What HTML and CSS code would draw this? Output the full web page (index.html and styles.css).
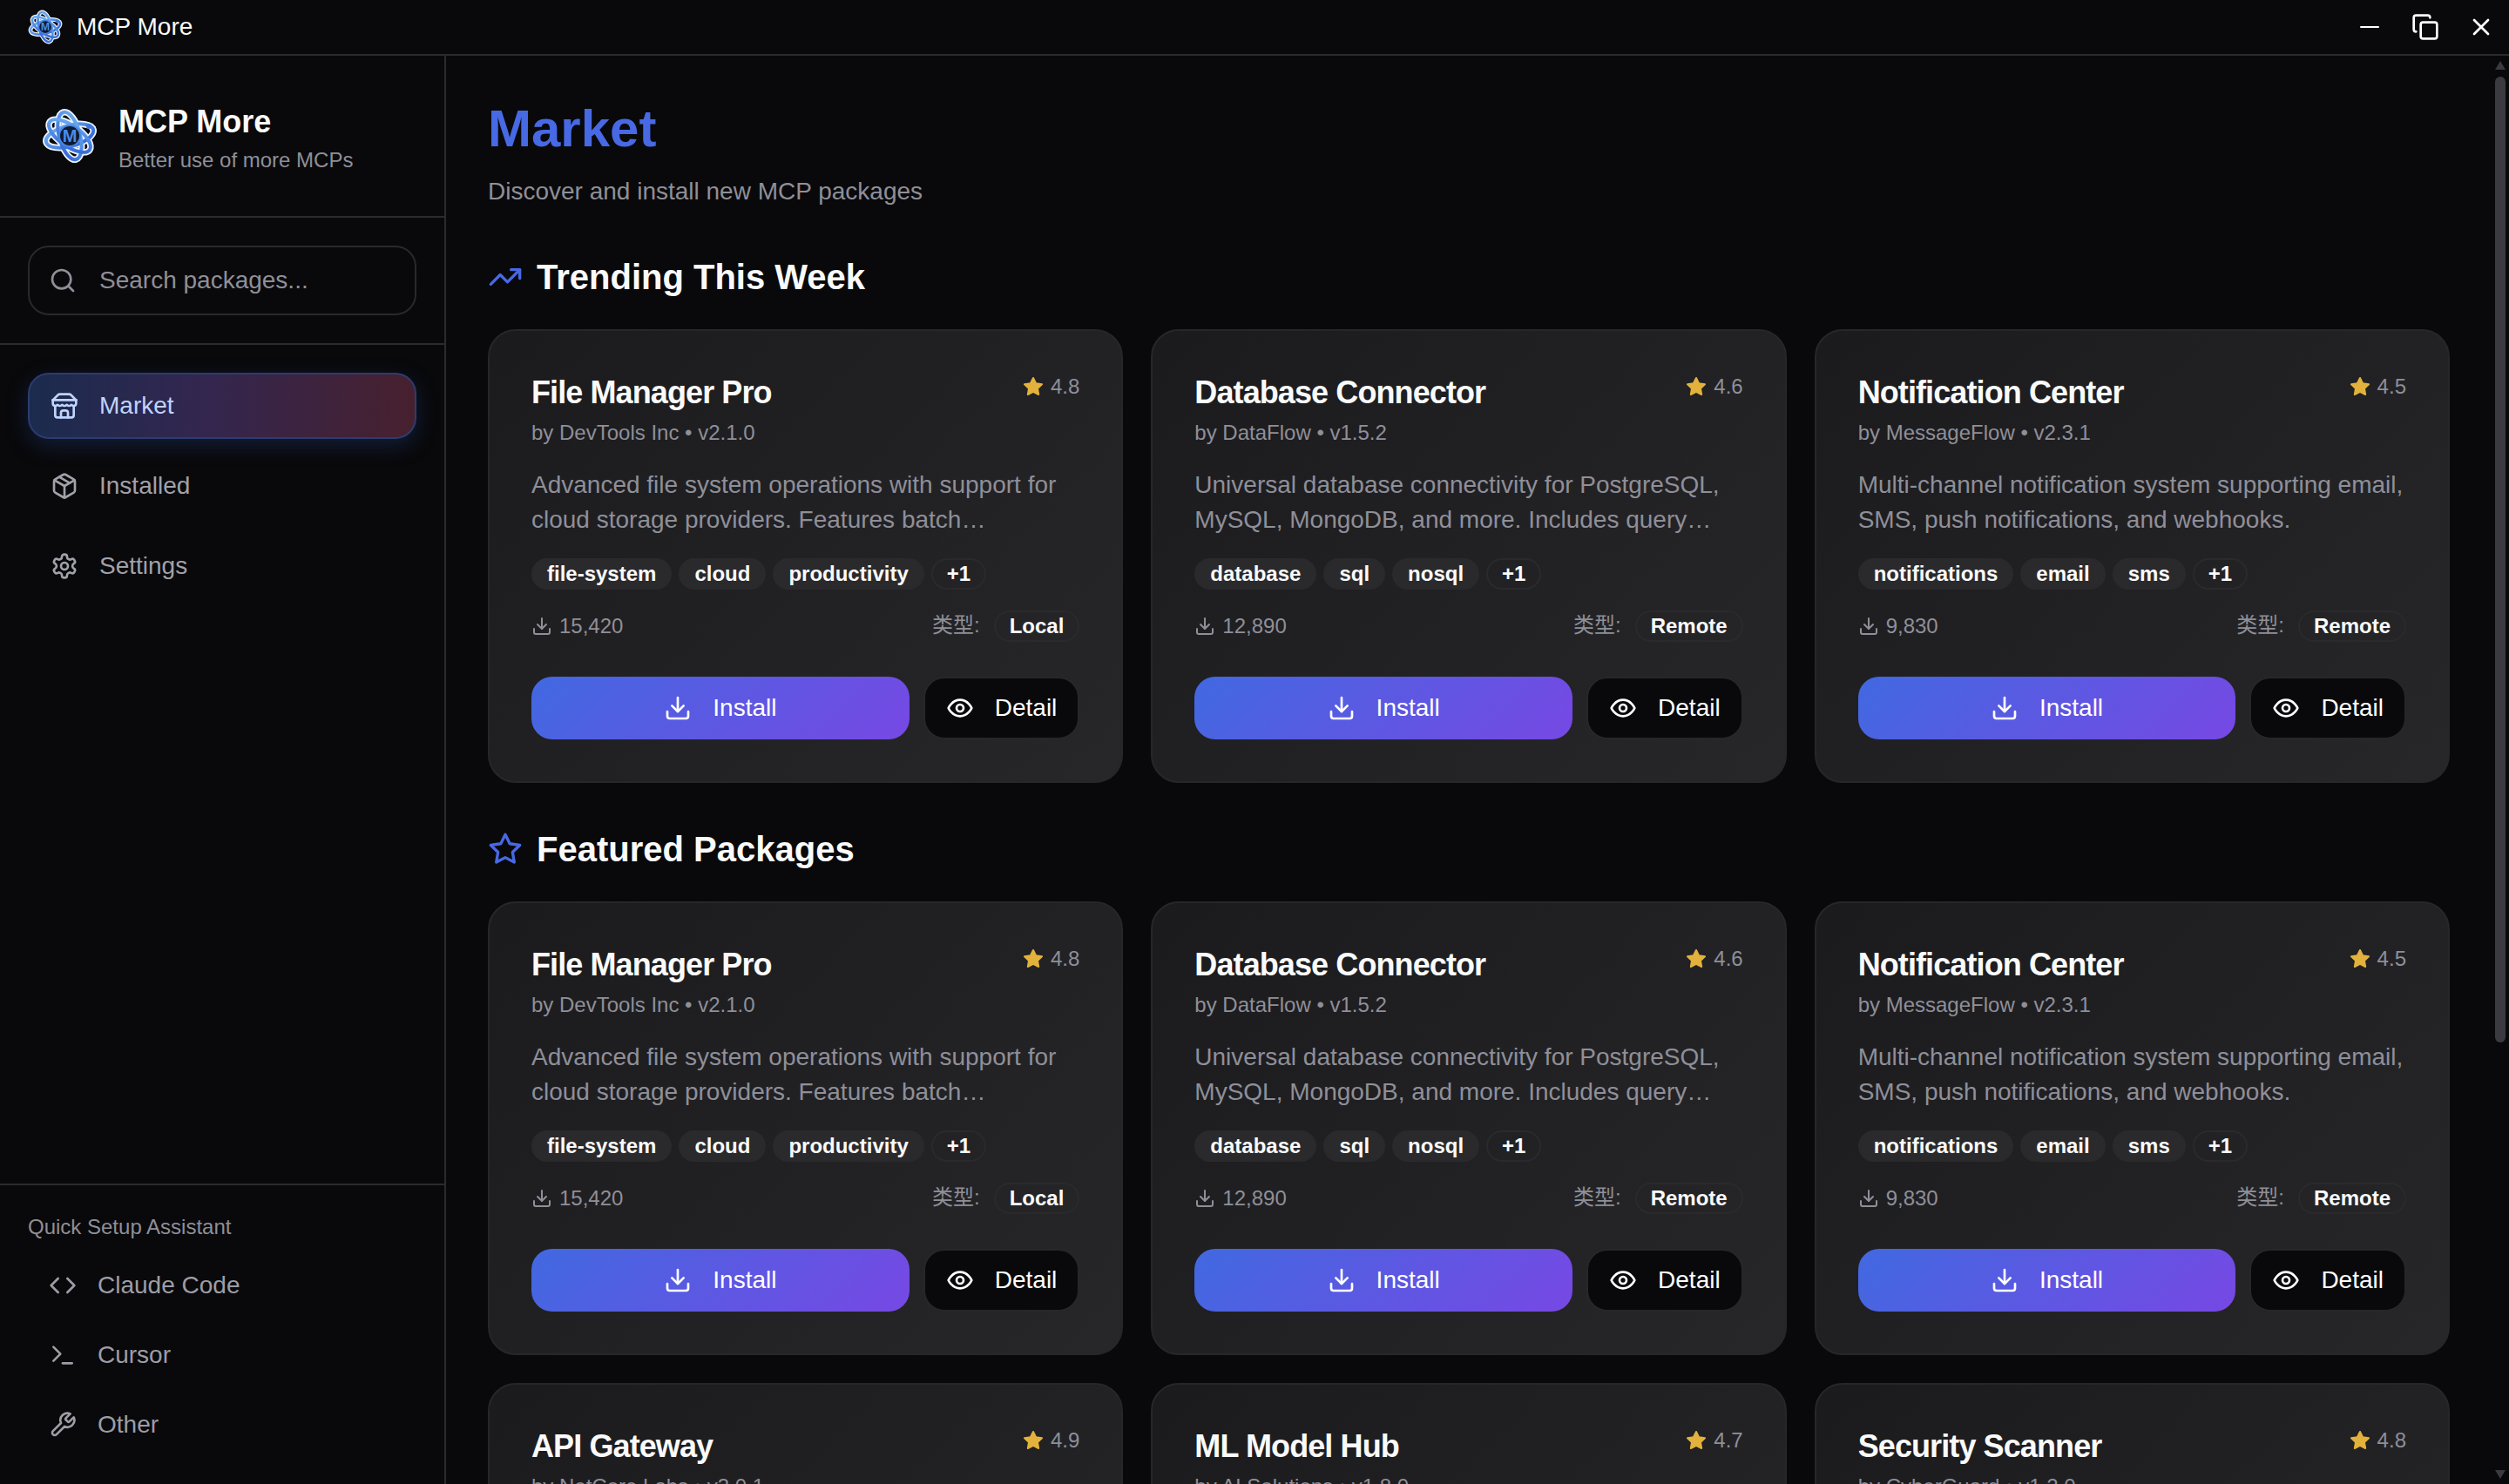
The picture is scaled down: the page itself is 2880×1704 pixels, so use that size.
FILE: index.html
```html
<!DOCTYPE html>
<html lang="en">
<head>
    <meta charset="UTF-8">
    <title>MCP More</title>
    <link rel="stylesheet" href="styles.css">
</head>
<body>
    <!-- Shared icons -->
    <svg class="icon-defs" width="0" height="0">
        <defs>
            <linearGradient id="orbit-blue" x1="0" y1="0" x2="1" y2="1">
                <stop offset="0" stop-color="#6fb2f2"/>
                <stop offset="1" stop-color="#2f63d6"/>
            </linearGradient>
        </defs>
        <symbol id="logo" viewBox="0 0 64 64">
            <g fill="none" stroke="#eef4ff" stroke-width="7.5">
                <ellipse cx="32" cy="32" rx="28" ry="12" transform="rotate(-15 32 32)"/>
                <ellipse cx="32" cy="32" rx="28" ry="12" transform="rotate(75 32 32)"/>
                <ellipse cx="32" cy="32" rx="28" ry="12" transform="rotate(35 32 32)"/>
            </g>
            <g fill="none" stroke="url(#orbit-blue)" stroke-width="4">
                <ellipse cx="32" cy="32" rx="28" ry="12" transform="rotate(-15 32 32)"/>
                <ellipse cx="32" cy="32" rx="28" ry="12" transform="rotate(75 32 32)"/>
                <ellipse cx="32" cy="32" rx="28" ry="12" transform="rotate(35 32 32)"/>
                <circle cx="32" cy="32" r="12" fill="#0d1a33" stroke="#4a86e0" stroke-width="2"/>
            </g>
            <circle cx="54" cy="21" r="3" fill="#3f78dc"/>
            <text x="32" y="39" class="logo-letter">M</text>
        </symbol>
        <symbol id="i-search" viewBox="0 0 24 24"><circle cx="11" cy="11" r="8"/><path d="m21 21-4.3-4.3"/></symbol>
        <symbol id="i-store" viewBox="0 0 24 24"><path d="m2 7 4.41-4.41A2 2 0 0 1 7.83 2h8.34a2 2 0 0 1 1.42.59L22 7"/><path d="M4 12v8a2 2 0 0 0 2 2h12a2 2 0 0 0 2-2v-8"/><path d="M15 22v-4a2 2 0 0 0-2-2h-2a2 2 0 0 0-2 2v4"/><path d="M2 7h20"/><path d="M22 7v3a2 2 0 0 1-2 2a2.7 2.7 0 0 1-1.59-.63.7.7 0 0 0-.82 0A2.7 2.7 0 0 1 16 12a2.7 2.7 0 0 1-1.59-.63.7.7 0 0 0-.82 0A2.7 2.7 0 0 1 12 12a2.7 2.7 0 0 1-1.59-.63.7.7 0 0 0-.82 0A2.7 2.7 0 0 1 8 12a2.7 2.7 0 0 1-1.59-.63.7.7 0 0 0-.82 0A2.7 2.7 0 0 1 4 12a2 2 0 0 1-2-2V7"/></symbol>
        <symbol id="i-package" viewBox="0 0 24 24"><path d="M21 8a2 2 0 0 0-1-1.73l-7-4a2 2 0 0 0-2 0l-7 4A2 2 0 0 0 3 8v8a2 2 0 0 0 1 1.73l7 4a2 2 0 0 0 2 0l7-4A2 2 0 0 0 21 16Z"/><path d="m3.3 7 8.7 5 8.7-5"/><path d="M12 22V12"/><path d="m7.5 4.27 9 5.15"/></symbol>
        <symbol id="i-settings" viewBox="0 0 24 24"><path d="M12.22 2h-.44a2 2 0 0 0-2 2v.18a2 2 0 0 1-1 1.73l-.43.25a2 2 0 0 1-2 0l-.15-.08a2 2 0 0 0-2.73.73l-.22.38a2 2 0 0 0 .73 2.73l.15.1a2 2 0 0 1 1 1.72v.51a2 2 0 0 1-1 1.74l-.15.09a2 2 0 0 0-.73 2.73l.22.38a2 2 0 0 0 2.73.73l.15-.08a2 2 0 0 1 2 0l.43.25a2 2 0 0 1 1 1.73V20a2 2 0 0 0 2 2h.44a2 2 0 0 0 2-2v-.18a2 2 0 0 1 1-1.73l.43-.25a2 2 0 0 1 2 0l.15.08a2 2 0 0 0 2.73-.73l.22-.39a2 2 0 0 0-.73-2.73l-.15-.08a2 2 0 0 1-1-1.74v-.5a2 2 0 0 1 1-1.74l.15-.09a2 2 0 0 0 .73-2.73l-.22-.38a2 2 0 0 0-2.73-.73l-.15.08a2 2 0 0 1-2 0l-.43-.25a2 2 0 0 1-1-1.73V4a2 2 0 0 0-2-2z"/><circle cx="12" cy="12" r="3"/></symbol>
        <symbol id="i-code" viewBox="0 0 24 24"><path d="m16 18 6-6-6-6"/><path d="m8 6-6 6 6 6"/></symbol>
        <symbol id="i-terminal" viewBox="0 0 24 24"><path d="m4 17 6-6-6-6"/><path d="M12 19h8"/></symbol>
        <symbol id="i-wrench" viewBox="0 0 24 24"><path d="M14.7 6.3a1 1 0 0 0 0 1.4l1.6 1.6a1 1 0 0 0 1.4 0l3.77-3.77a6 6 0 0 1-7.94 7.94l-6.91 6.91a2.12 2.12 0 0 1-3-3l6.91-6.91a6 6 0 0 1 7.94-7.94l-3.76 3.76z"/></symbol>
        <symbol id="i-trending" viewBox="0 0 24 24"><polyline points="22 7 13.5 15.5 8.5 10.5 2 17"/><polyline points="16 7 22 7 22 13"/></symbol>
        <symbol id="i-star" viewBox="0 0 24 24"><polygon points="12 2 15.09 8.26 22 9.27 17 14.14 18.18 21.02 12 17.77 5.82 21.02 7 14.14 2 9.27 8.91 8.26 12 2"/></symbol>
        <symbol id="i-download" viewBox="0 0 24 24"><path d="M21 15v4a2 2 0 0 1-2 2H5a2 2 0 0 1-2-2v-4"/><polyline points="7 10 12 15 17 10"/><line x1="12" y1="15" x2="12" y2="3"/></symbol>
        <symbol id="i-eye" viewBox="0 0 24 24"><path d="M2 12s3-7 10-7 10 7 10 7-3 7-10 7-10-7-10-7Z"/><circle cx="12" cy="12" r="3"/></symbol>
        <symbol id="i-minus" viewBox="0 0 24 24"><path d="M2 12h20"/></symbol>
        <symbol id="i-copy" viewBox="0 0 24 24"><rect x="8" y="8" width="14" height="14" rx="2"/><path d="M4 16c-1.1 0-2-.9-2-2V4c0-1.1.9-2 2-2h10c1.1 0 2 .9 2 2"/></symbol>
        <symbol id="i-close" viewBox="0 0 24 24"><path d="M18 6 6 18"/><path d="m6 6 12 12"/></symbol>
    </svg>

    <!-- Title bar -->
    <header class="titlebar">
        <div class="titlebar-brand">
            <svg class="titlebar-logo"><use href="#logo"/></svg>
            <span>MCP More</span>
        </div>
        <div class="window-controls">
            <svg class="icon win-min"><use href="#i-minus"/></svg>
            <svg class="icon win-copy"><use href="#i-copy"/></svg>
            <svg class="icon win-close"><use href="#i-close"/></svg>
        </div>
    </header>

    <div class="app">
        <!-- Sidebar -->
        <aside class="sidebar">
            <div class="brand">
                <svg class="brand-logo"><use href="#logo"/></svg>
                <div>
                    <div class="brand-name">MCP More</div>
                    <div class="brand-tagline">Better use of more MCPs</div>
                </div>
            </div>
            <div class="search-wrap">
                <div class="search">
                    <svg class="icon"><use href="#i-search"/></svg>
                    <span>Search packages...</span>
                </div>
            </div>
            <nav class="nav">
                <a class="nav-item active"><svg class="icon"><use href="#i-store"/></svg>Market</a>
                <a class="nav-item"><svg class="icon"><use href="#i-package"/></svg>Installed</a>
                <a class="nav-item"><svg class="icon"><use href="#i-settings"/></svg>Settings</a>
            </nav>
            <div class="assistant">
                <div class="assistant-label">Quick Setup Assistant</div>
                <a class="assistant-item"><svg class="icon"><use href="#i-code"/></svg>Claude Code</a>
                <a class="assistant-item"><svg class="icon"><use href="#i-terminal"/></svg>Cursor</a>
                <a class="assistant-item"><svg class="icon"><use href="#i-wrench"/></svg>Other</a>
            </div>
        </aside>

        <!-- Main content -->
        <main class="main">
            <h1 class="page-title">Market</h1>
            <p class="page-subtitle">Discover and install new MCP packages</p>

            <h2 class="section-title"><svg class="icon"><use href="#i-trending"/></svg>Trending This Week</h2>
            <div class="grid">
                <article class="card">
                    <div class="card-head">
                        <h3>File Manager Pro</h3>
                        <div class="rating"><svg class="icon"><use href="#i-star"/></svg>4.8</div>
                    </div>
                    <div class="card-by">by DevTools Inc • v2.1.0</div>
                    <p class="card-desc">Advanced file system operations with support for cloud storage providers. Features batch…</p>
                    <div class="tags"><span class="tag">file-system</span><span class="tag">cloud</span><span class="tag">productivity</span><span class="tag tag-line">+1</span></div>
                    <div class="card-meta">
                        <div class="downloads"><svg class="icon"><use href="#i-download"/></svg>15,420</div>
                        <div class="type"><span class="type-label">类型:</span><span class="tag tag-line">Local</span></div>
                    </div>
                    <div class="actions">
                        <button class="btn-install"><svg class="icon"><use href="#i-download"/></svg>Install</button>
                        <button class="btn-detail"><svg class="icon"><use href="#i-eye"/></svg>Detail</button>
                    </div>
                </article>
                <article class="card">
                    <div class="card-head">
                        <h3>Database Connector</h3>
                        <div class="rating"><svg class="icon"><use href="#i-star"/></svg>4.6</div>
                    </div>
                    <div class="card-by">by DataFlow • v1.5.2</div>
                    <p class="card-desc">Universal database connectivity for PostgreSQL, MySQL, MongoDB, and more. Includes query…</p>
                    <div class="tags"><span class="tag">database</span><span class="tag">sql</span><span class="tag">nosql</span><span class="tag tag-line">+1</span></div>
                    <div class="card-meta">
                        <div class="downloads"><svg class="icon"><use href="#i-download"/></svg>12,890</div>
                        <div class="type"><span class="type-label">类型:</span><span class="tag tag-line">Remote</span></div>
                    </div>
                    <div class="actions">
                        <button class="btn-install"><svg class="icon"><use href="#i-download"/></svg>Install</button>
                        <button class="btn-detail"><svg class="icon"><use href="#i-eye"/></svg>Detail</button>
                    </div>
                </article>
                <article class="card">
                    <div class="card-head">
                        <h3>Notification Center</h3>
                        <div class="rating"><svg class="icon"><use href="#i-star"/></svg>4.5</div>
                    </div>
                    <div class="card-by">by MessageFlow • v2.3.1</div>
                    <p class="card-desc">Multi-channel notification system supporting email, SMS, push notifications, and webhooks.</p>
                    <div class="tags"><span class="tag">notifications</span><span class="tag">email</span><span class="tag">sms</span><span class="tag tag-line">+1</span></div>
                    <div class="card-meta">
                        <div class="downloads"><svg class="icon"><use href="#i-download"/></svg>9,830</div>
                        <div class="type"><span class="type-label">类型:</span><span class="tag tag-line">Remote</span></div>
                    </div>
                    <div class="actions">
                        <button class="btn-install"><svg class="icon"><use href="#i-download"/></svg>Install</button>
                        <button class="btn-detail"><svg class="icon"><use href="#i-eye"/></svg>Detail</button>
                    </div>
                </article>
            </div>

            <h2 class="section-title section-next"><svg class="icon"><use href="#i-star"/></svg>Featured Packages</h2>
            <div class="grid">
                <article class="card">
                    <div class="card-head">
                        <h3>File Manager Pro</h3>
                        <div class="rating"><svg class="icon"><use href="#i-star"/></svg>4.8</div>
                    </div>
                    <div class="card-by">by DevTools Inc • v2.1.0</div>
                    <p class="card-desc">Advanced file system operations with support for cloud storage providers. Features batch…</p>
                    <div class="tags"><span class="tag">file-system</span><span class="tag">cloud</span><span class="tag">productivity</span><span class="tag tag-line">+1</span></div>
                    <div class="card-meta">
                        <div class="downloads"><svg class="icon"><use href="#i-download"/></svg>15,420</div>
                        <div class="type"><span class="type-label">类型:</span><span class="tag tag-line">Local</span></div>
                    </div>
                    <div class="actions">
                        <button class="btn-install"><svg class="icon"><use href="#i-download"/></svg>Install</button>
                        <button class="btn-detail"><svg class="icon"><use href="#i-eye"/></svg>Detail</button>
                    </div>
                </article>
                <article class="card">
                    <div class="card-head">
                        <h3>Database Connector</h3>
                        <div class="rating"><svg class="icon"><use href="#i-star"/></svg>4.6</div>
                    </div>
                    <div class="card-by">by DataFlow • v1.5.2</div>
                    <p class="card-desc">Universal database connectivity for PostgreSQL, MySQL, MongoDB, and more. Includes query…</p>
                    <div class="tags"><span class="tag">database</span><span class="tag">sql</span><span class="tag">nosql</span><span class="tag tag-line">+1</span></div>
                    <div class="card-meta">
                        <div class="downloads"><svg class="icon"><use href="#i-download"/></svg>12,890</div>
                        <div class="type"><span class="type-label">类型:</span><span class="tag tag-line">Remote</span></div>
                    </div>
                    <div class="actions">
                        <button class="btn-install"><svg class="icon"><use href="#i-download"/></svg>Install</button>
                        <button class="btn-detail"><svg class="icon"><use href="#i-eye"/></svg>Detail</button>
                    </div>
                </article>
                <article class="card">
                    <div class="card-head">
                        <h3>Notification Center</h3>
                        <div class="rating"><svg class="icon"><use href="#i-star"/></svg>4.5</div>
                    </div>
                    <div class="card-by">by MessageFlow • v2.3.1</div>
                    <p class="card-desc">Multi-channel notification system supporting email, SMS, push notifications, and webhooks.</p>
                    <div class="tags"><span class="tag">notifications</span><span class="tag">email</span><span class="tag">sms</span><span class="tag tag-line">+1</span></div>
                    <div class="card-meta">
                        <div class="downloads"><svg class="icon"><use href="#i-download"/></svg>9,830</div>
                        <div class="type"><span class="type-label">类型:</span><span class="tag tag-line">Remote</span></div>
                    </div>
                    <div class="actions">
                        <button class="btn-install"><svg class="icon"><use href="#i-download"/></svg>Install</button>
                        <button class="btn-detail"><svg class="icon"><use href="#i-eye"/></svg>Detail</button>
                    </div>
                </article>
                <article class="card">
                    <div class="card-head">
                        <h3>API Gateway</h3>
                        <div class="rating"><svg class="icon"><use href="#i-star"/></svg>4.9</div>
                    </div>
                    <div class="card-by">by NetCore Labs • v3.0.1</div>
                </article>
                <article class="card">
                    <div class="card-head">
                        <h3>ML Model Hub</h3>
                        <div class="rating"><svg class="icon"><use href="#i-star"/></svg>4.7</div>
                    </div>
                    <div class="card-by">by AI Solutions • v1.8.0</div>
                </article>
                <article class="card">
                    <div class="card-head">
                        <h3>Security Scanner</h3>
                        <div class="rating"><svg class="icon"><use href="#i-star"/></svg>4.8</div>
                    </div>
                    <div class="card-by">by CyberGuard • v1.2.0</div>
                </article>
            </div>

            <!-- Scrollbar drawn by hand, the window hides the native one -->
            <div class="scrollbar">
                <span class="scroll-up"></span>
                <span class="scroll-thumb"></span>
                <span class="scroll-down"></span>
            </div>
        </main>
    </div>
</body>
</html>
```

FILE: styles.css
```css
/* Global */
* {
    box-sizing: border-box;
}
html, body {
    height: 100%;
}
body {
    margin: 0;
    display: flex;
    flex-direction: column;
    overflow: hidden;
    background-color: #09090b;
    color: #fafafa;
    font-family: "Liberation Sans", "Noto Sans CJK SC", sans-serif;
}
.icon-defs {
    position: absolute;
}
.logo-letter {
    font-family: "Liberation Sans", sans-serif;
    font-size: 20px;
    font-weight: bold;
    text-anchor: middle;
    fill: #4a8be8;
}
.icon {
    flex: none;
    width: 32px;
    height: 32px;
    fill: none;
    stroke: currentColor;
    stroke-width: 2;
    stroke-linecap: round;
    stroke-linejoin: round;
}

/* Title bar */
.titlebar {
    flex: none;
    height: 64px;
    display: flex;
    align-items: center;
    justify-content: space-between;
    border-bottom: 2px solid #2b2b2e;
}
.titlebar-brand {
    display: flex;
    align-items: center;
    gap: 16px;
    padding-left: 32px;
    font-size: 28px;
}
.titlebar-logo {
    width: 40px;
    height: 42px;
}
.window-controls {
    display: flex;
    align-items: center;
    color: #fff;
    padding-right: 16px;
}
.win-min {
    width: 24px;
    height: 24px;
    margin-right: 36px;
}
.win-copy {
    width: 32px;
    height: 32px;
    margin-right: 32px;
}
.win-close {
    width: 32px;
    height: 32px;
}

/* App layout */
.app {
    flex: 1;
    display: flex;
    min-height: 0;
}
.sidebar {
    flex: none;
    width: 512px;
    display: flex;
    flex-direction: column;
    border-right: 2px solid #2b2b2e;
}
.brand {
    height: 186px;
    display: flex;
    align-items: center;
    gap: 24px;
    padding: 8px 48px 0;
    border-bottom: 2px solid #2b2b2e;
}
.brand-logo {
    flex: none;
    width: 64px;
    height: 64px;
    margin-bottom: 8px;
}
.brand-name {
    font-size: 36px;
    font-weight: bold;
    line-height: 40px;
}
.brand-tagline {
    margin-top: 8px;
    font-size: 24px;
    line-height: 32px;
    color: #8f8f98;
}
.search-wrap {
    padding: 32px;
    border-bottom: 2px solid #2b2b2e;
}
.search {
    height: 80px;
    display: flex;
    align-items: center;
    gap: 26px;
    padding-left: 22px;
    border: 2px solid #29292c;
    border-radius: 24px;
    font-size: 28px;
    color: #8f8f98;
}
.nav {
    flex: 1;
    display: flex;
    flex-direction: column;
    gap: 16px;
    padding: 32px;
}
.nav-item {
    height: 76px;
    display: flex;
    align-items: center;
    gap: 24px;
    padding-left: 24px;
    border: 2px solid transparent;
    border-radius: 24px;
    font-size: 28px;
    color: #a1a1aa;
}
.nav-item.active {
    color: #bfd4fd;
    background: linear-gradient(90deg, #1b2b4e 0%, #33264f 45%, #47202e 100%);
    border-color: #2c3c70;
    box-shadow: 0 8px 24px rgba(37, 70, 140, 0.35);
}
.assistant {
    padding: 32px 32px 32px;
    border-top: 2px solid #2b2b2e;
}
.assistant-label {
    font-size: 24px;
    line-height: 32px;
    color: #8f8f98;
    margin-bottom: 15px;
}
.assistant-item {
    height: 72px;
    display: flex;
    align-items: center;
    gap: 24px;
    padding-left: 24px;
    margin-bottom: 8px;
    font-size: 28px;
    color: #9d9da6;
}
.assistant-item:last-child {
    margin-bottom: 0;
}

/* Main */
.main {
    flex: 1;
    position: relative;
    overflow: hidden;
    padding: 48px 68px 0 48px;
}
.page-title {
    margin: 0;
    font-size: 60px;
    line-height: 72px;
    font-weight: bold;
    color: #4869e4;
}
.page-subtitle {
    margin: 12px 0 0;
    font-size: 28px;
    line-height: 48px;
    color: #8f8f98;
}
.section-title {
    display: flex;
    align-items: center;
    gap: 16px;
    margin: 46px 0 32px;
    font-size: 40px;
    line-height: 56px;
    font-weight: bold;
}
.section-title .icon {
    width: 40px;
    height: 40px;
    color: #4869e4;
}
.section-next {
    margin-top: 48px;
}
.grid {
    display: grid;
    grid-template-columns: repeat(3, 1fr);
    gap: 32px;
}

/* Package card */
.card {
    min-height: 521px;
    padding: 48px;
    border: 2px solid #27272a;
    border-radius: 32px;
    background: linear-gradient(135deg, #1b1b1e 0%, #27272a 100%);
}
.card-head {
    display: flex;
    justify-content: space-between;
    align-items: flex-start;
}
.card-head h3 {
    margin: 0;
    font-size: 36px;
    line-height: 46px;
    font-weight: bold;
    letter-spacing: -0.9px;
}
.rating {
    display: flex;
    align-items: center;
    gap: 8px;
    font-size: 24px;
    line-height: 32px;
    color: #8f8f98;
}
.rating .icon {
    width: 24px;
    height: 24px;
    fill: #e3b23c;
    stroke: #e3b23c;
}
.card-by {
    margin-top: 5px;
    font-size: 24px;
    line-height: 36px;
    color: #8f8f98;
}
.card-desc {
    margin: 22px 0 0;
    height: 80px;
    font-size: 28px;
    line-height: 40px;
    color: #8f8f98;
}
.tags {
    display: flex;
    gap: 8px;
    margin-top: 24px;
}
.tag {
    height: 36px;
    display: flex;
    align-items: center;
    padding: 0 16px;
    border: 2px solid #2a2a2d;
    border-radius: 999px;
    background-color: #2a2a2d;
    font-size: 24px;
    font-weight: bold;
    color: #fafafa;
}
.tag-line {
    background-color: transparent;
}
.card-meta {
    display: flex;
    justify-content: space-between;
    align-items: center;
    margin-top: 24px;
    height: 36px;
}
.downloads {
    display: flex;
    align-items: center;
    gap: 8px;
    font-size: 24px;
    color: #8f8f98;
}
.downloads .icon {
    width: 24px;
    height: 24px;
}
.type {
    display: flex;
    align-items: center;
    gap: 16px;
}
.type-label {
    font-size: 24px;
    line-height: 32px;
    margin-bottom: 2px;
    color: #8f8f98;
}
.actions {
    display: flex;
    gap: 16px;
    margin-top: 40px;
}
.btn-install, .btn-detail {
    height: 72px;
    display: flex;
    align-items: center;
    justify-content: center;
    gap: 24px;
    border-radius: 24px;
    font-family: inherit;
    font-size: 28px;
    color: #fff;
}
.btn-install {
    flex: 1;
    border: none;
    background: linear-gradient(135deg, #4169e1 0%, #7748e4 100%);
}
.btn-detail {
    flex: none;
    padding: 0 24px;
    border: 2px solid #27272a;
    background-color: #09090b;
}

/* Scrollbar */
.scrollbar {
    position: absolute;
    top: 0;
    right: 4px;
    bottom: 0;
    width: 12px;
}
.scroll-up, .scroll-down {
    position: absolute;
    left: 0;
    width: 0;
    height: 0;
    border-left: 6px solid transparent;
    border-right: 6px solid transparent;
}
.scroll-up {
    top: 6px;
    border-bottom: 10px solid #3a3a40;
}
.scroll-down {
    bottom: 6px;
    border-top: 10px solid #3a3a40;
}
.scroll-thumb {
    position: absolute;
    top: 24px;
    left: 0;
    width: 12px;
    height: 1109px;
    border-radius: 6px;
    background-color: #3a3a40;
}
```
